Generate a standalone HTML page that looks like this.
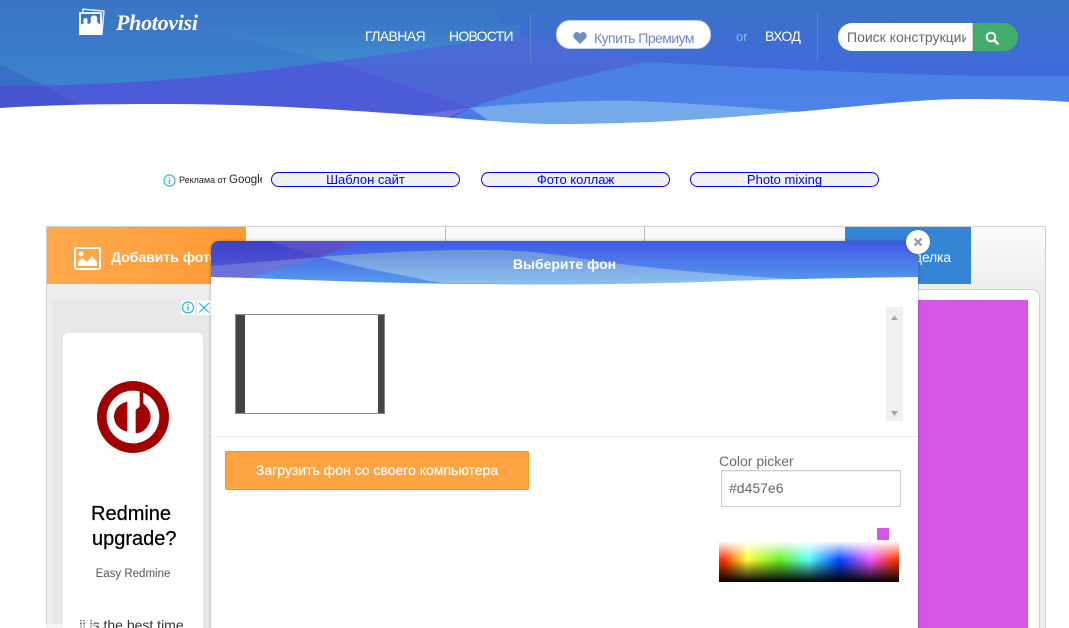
<!DOCTYPE html>
<html lang="ru"><head><meta charset="utf-8"><title>Photovisi</title>
<style>
html,body{margin:0;padding:0;background:#fff;overflow:hidden;width:1069px;height:628px}
#root{width:1069px;height:628px;position:relative;overflow:hidden;font-family:"Liberation Sans",sans-serif}
.a{position:absolute;white-space:nowrap}
.pill{position:absolute;top:172px;height:13px;border:1px solid #00f;border-radius:8px;background:#f0f0f0;color:#00f;font-size:13px;line-height:13px;text-align:center}
</style></head><body><div id="root">

<svg class="a" style="left:0;top:0" width="1069" height="130" viewBox="0 0 1069 130">
<defs>
<linearGradient id="g1" x1="0" y1="0" x2="0" y2="1"><stop offset="0" stop-color="#3a74c4"/><stop offset=".65" stop-color="#3b82ce"/></linearGradient>
<linearGradient id="g3" x1="0" y1="0" x2="0" y2="1"><stop offset="0" stop-color="#3a74c6"/><stop offset="1" stop-color="#4268de"/></linearGradient>
<linearGradient id="g4" x1="0" y1="0" x2="0" y2="1"><stop offset="0" stop-color="#4a7ee4"/><stop offset="1" stop-color="#4d85ea"/></linearGradient>
<linearGradient id="g5" x1="0" y1="0" x2="0" y2="1"><stop offset="0" stop-color="#3a78c8"/><stop offset="1" stop-color="#3f8cce"/></linearGradient>
<linearGradient id="g6" x1="0" y1="0" x2="0" y2="1"><stop offset="0" stop-color="#4a6cd4"/><stop offset="1" stop-color="#5062d8"/></linearGradient>
</defs>
<rect width="1069" height="130" fill="url(#g1)"/>
<path d="M500 0H1069V80H500Z" fill="url(#g3)"/>
<path d="M180 26C240 38 290 50 330 62C400 52 470 44 520 36V25C400 25 290 26 180 26Z" fill="url(#g5)"/>
<path d="M0 65L45 86H0Z" fill="#3a6ec8"/>
<path d="M0 86C100 86 200 80 330 62C400 52 470 42 520 36C570 48 620 58 680 64C800 75 950 80 1069 76V130H0Z" fill="url(#g6)"/>
<path d="M0 86C100 86 200 80 330 62C380 75 430 95 470 108L505 125H0Z" fill="#4c5cd8"/>
<path d="M0 86H45L85 108H0Z" fill="#4655cf"/>
<path d="M470 108C520 90 580 77 646 62C800 70 950 78 1069 76V130H470Z" fill="url(#g4)"/>
<path d="M440 125L470 108L510 126Z" fill="#4a7be4"/>
<path d="M400 118C430 114 450 110 470 108L440 120Z" fill="#6a70d8"/>
<path d="M470 108C530 102 600 100 640 101C700 104 760 108 800 112L640 128H500Z" fill="#74a9ea"/>
<path d="M0 108C60 104 120 104 170 104C270 104 380 112 505 122C550 125 580 124 620 123C690 121 740 116 795 112C860 106 920 99 968 99C1010 99 1040 100 1069 102V130H0Z" fill="#fff"/>
<line x1="530.500" y1="13" x2="530.500" y2="62" stroke="#6f8fd0" stroke-opacity=".6"/>
<line x1="817.500" y1="13" x2="817.500" y2="62" stroke="#6f8fd0" stroke-opacity=".6"/>
<g transform="rotate(5 92 21)"><rect x="82" y="10" width="21" height="23" fill="#3a76c4" stroke="#e8eef8" stroke-width="1.500"/></g>
<rect x="80" y="13" width="21" height="20" fill="#3a76c4" stroke="#fff" stroke-width="1.800"/>
<path d="M79 35V26C81 24 83 24 84 23C83 21 83 18 85.500 18C88 18 88 21 87 23L89 24C91 22.500 91 22 91 21C90 18 91 15.500 94 15.500C97 15.500 98 18 97 21C97 23 100 24 102 26V35Z" fill="#fff"/>
</svg>
<div class="a" style="left:116px;top:8px;font:italic bold 22px/30px 'Liberation Serif',serif;color:#fff;letter-spacing:-.3px">Photovisi</div>

<div class="a" style="left:365px;top:28px;color:#fff;font-size:14px;line-height:16px;letter-spacing:-.6px">ГЛАВНАЯ</div>
<div class="a" style="left:449px;top:28px;color:#fff;font-size:14px;line-height:16px;letter-spacing:-.75px">НОВОСТИ</div>
<div class="a" style="left:556px;top:20px;width:153px;height:27px;background:#fff;border-radius:14px;border:1px solid #c4cfe6"></div>
<svg class="a" style="left:573px;top:32px" width="14" height="12" viewBox="0 0 15 13"><path d="M7.500 13L1 6.500C-1 3 1.500 0 4 0C5.500 0 6.800 .8 7.500 2C8.200 .8 9.500 0 11 0C13.500 0 16 3 14 6.500Z" fill="#6b8fc6"/></svg>
<div class="a" style="left:594px;top:30px;color:#6f87c0;font-size:14px;line-height:16px;letter-spacing:-.55px">Купить Премиум</div>
<div class="a" style="left:736px;top:29px;color:#9db2e0;font-size:13px;line-height:16px">or</div>
<div class="a" style="left:765px;top:28px;color:#fff;font-size:14px;line-height:16px;letter-spacing:-.6px">ВХОД</div>
<div class="a" style="left:838px;top:23px;width:135px;height:28px;background:#fff;border-radius:14px 0 0 14px;border-right:1px solid #ccc;box-sizing:border-box"></div>
<div class="a" style="left:847px;top:23px;width:119px;height:28px;overflow:hidden;color:#666;font-size:14px;line-height:28px">Поиск конструкции</div>
<div class="a" style="left:973px;top:23px;width:45px;height:28px;background:#42ac6a;border-radius:0 14px 14px 0"></div>
<svg class="a" style="left:985px;top:31px" width="14" height="14" viewBox="0 0 14 14"><circle cx="6" cy="6" r="4.300" fill="none" stroke="#fff" stroke-width="2"/><path d="M9.200 9.200L12.600 12.600" stroke="#fff" stroke-width="2.600" stroke-linecap="round"/></svg>

<svg class="a" style="left:163px;top:174px" width="13" height="13" viewBox="0 0 13 13"><circle cx="6.500" cy="6.500" r="5.500" fill="none" stroke="#3fb6d3" stroke-width="1.200"/><rect x="5.800" y="5.500" width="1.400" height="4.500" fill="#3fb6d3"/><rect x="5.800" y="3" width="1.400" height="1.400" fill="#3fb6d3"/></svg>
<div class="a" style="left:179px;top:174px;width:83px;overflow:hidden;font-size:9px;line-height:13px;color:#222">Реклама от <span style="font-size:11.500px">Google</span></div>
<div class="pill" style="left:271px;width:187px">Шаблон сайт</div>
<div class="pill" style="left:481px;width:187px">Фото коллаж</div>
<div class="pill" style="left:690px;width:187px">Photo mixing</div>

<div class="a" style="left:46px;top:226px;width:998px;height:402px;border:1px solid #d0d0d0;border-bottom:0;background:#eee"></div>
<div class="a" style="left:47px;top:227px;width:998px;height:57px;background:linear-gradient(#fbfbfb,#eeeeee)"></div>
<div class="a" style="left:47px;top:227px;width:199px;height:57px;background:linear-gradient(90deg,#ffa94d,#ff9a35)"></div>
<svg class="a" style="left:74px;top:247px" width="27" height="23" viewBox="0 0 27 23"><rect x="1" y="1" width="25" height="21" rx="2" fill="none" stroke="#fff" stroke-width="2"/><circle cx="7" cy="7" r="2.500" fill="#fff"/><path d="M4 19V15L8 11L13 15L18 9L23 15V19Z" fill="#fff"/></svg>
<div class="a" style="left:111px;top:249px;color:#fff;font-size:14px;font-weight:bold;line-height:17px">Добавить фото</div>
<div class="a" style="left:445px;top:227px;width:1px;height:57px;background:#bbb"></div>
<div class="a" style="left:644px;top:227px;width:1px;height:57px;background:#bbb"></div>
<div class="a" style="left:845px;top:227px;width:126px;height:57px;background:#3585d6;color:#fff;font-size:14px;line-height:60px;overflow:hidden"><span class="a" style="left:59px;top:0;letter-spacing:-.2px">Сделка</span></div>

<div class="a" style="left:53px;top:299px;width:158px;height:329px;background:#e8e8e8"></div>
<div class="a" style="left:181px;top:300px;width:14px;height:15px;background:#fff"></div>
<div class="a" style="left:197px;top:300px;width:14px;height:15px;background:#fff"></div>
<svg class="a" style="left:181px;top:300px" width="30" height="15" viewBox="0 0 30 15"><circle cx="7" cy="7.500" r="5.500" fill="none" stroke="#28b6d8" stroke-width="1.200"/><rect x="6.300" y="6.500" width="1.400" height="4" fill="#28b6d8"/><rect x="6.300" y="3.800" width="1.400" height="1.400" fill="#28b6d8"/><path d="M18 3L28 12.500M28 3L18 12.500" stroke="#28b6d8" stroke-width="1.200"/></svg>
<div class="a" style="left:63px;top:333px;width:140px;height:295px;background:#fff;border-radius:5px 5px 0 0"></div>
<svg class="a" style="left:89px;top:375px" width="86" height="86" viewBox="0 0 258 258"><circle cx="132" cy="126" r="108" fill="#a00000"/><circle cx="132" cy="126" r="79" fill="#fff"/><path d="M115 80C90 85 75 105 75 125C75 145 90 165 115 170Z" fill="#a00000"/><path d="M140 175V105L152 95V48H163V85C175 95 185 110 185 125C185 150 165 175 140 175Z" fill="#a00000"/></svg>
<div class="a" style="left:91px;top:502px;color:#000;font-size:20px;line-height:25px;-webkit-text-stroke:.25px #000">Redmine<br><span style="margin-left:1px">upgrade?</span></div>
<div class="a" style="left:63px;top:566px;width:140px;text-align:center;color:#555;font-size:11.500px;line-height:16px">Easy Redmine</div>
<div class="a" style="left:59px;top:617px;width:140px;text-align:center;color:#333;font-size:14px;line-height:17px;padding-left:5px;box-sizing:border-box">ii is the best time</div>
<div class="a" style="left:46px;top:624px;width:50px;height:4px;background:rgba(255,255,255,.55)"></div>

<div class="a" style="left:880px;top:289px;width:160px;height:339px;background:#fff;border:1px solid #d0d0d0;border-bottom:0;border-radius:8px 8px 0 0;box-sizing:border-box"></div>
<div class="a" style="left:918px;top:300px;width:110px;height:328px;background:#d457e6"></div>

<div class="a" style="left:211px;top:241px;width:707px;height:400px;background:#fff;border-radius:8px 0 0 0;box-shadow:0 0 3px rgba(0,0,0,.3);overflow:hidden">
<svg style="position:absolute;left:0;top:0" width="707" height="48" viewBox="0 0 707 48">
<defs>
<linearGradient id="m1" x1="0" y1="0" x2="0" y2="1"><stop offset="0" stop-color="#4258e2"/><stop offset=".85" stop-color="#5598ee"/></linearGradient>
<linearGradient id="m2" x1="0" y1="0" x2="0" y2="1"><stop offset=".1" stop-color="#6e96dc"/><stop offset=".9" stop-color="#8cbcee"/></linearGradient>
<linearGradient id="m3" x1="0" y1="0" x2="0" y2="1"><stop offset="0" stop-color="#3f40c6"/><stop offset="1" stop-color="#4a52d4"/></linearGradient>
</defs>
<rect width="707" height="48" fill="url(#m1)"/>
<path d="M0 0H59L109 16L0 25Z" fill="url(#m3)"/>
<path d="M59 0H150L109 16Z" fill="#5a50c8"/>
<path d="M0 25L109 16L37 37H0Z" fill="#6b72d8"/>
<path d="M109 16C170 11 220 9 272 9C320 9 350 14 385 20C440 27 510 34 579 38C480 44 340 44 231 42C190 34 145 26 109 16Z" fill="url(#m2)"/>
<path d="M0 36C60 37 170 43 272 43C350 44 430 43 489 41C570 38 640 37 707 36V48H0Z" fill="#fff"/>
</svg>
<div style="position:absolute;left:0;width:707px;top:15px;text-align:center;color:#fff;font-size:14px;font-weight:bold;line-height:17px">Выберите фон</div>
<div style="position:absolute;left:24px;top:73px;width:148px;height:98px;border:1px solid #888;background:#fff"><div style="position:absolute;left:0;top:0;width:9px;height:98px;background:#444"></div><div style="position:absolute;right:0;top:0;width:6px;height:98px;background:#444"></div></div>
<div style="position:absolute;left:675px;top:66px;width:17px;height:114px;background:#f0f0f0"></div>
<svg style="position:absolute;left:675px;top:66px" width="17" height="114" viewBox="0 0 17 114"><path d="M5 13L8.500 8.500L12 13Z" fill="#a3a3a3"/><path d="M5 104H12L8.500 109Z" fill="#a3a3a3"/></svg>
<div style="position:absolute;left:0;top:195px;width:707px;height:1px;background:#eceff3"></div>
<div style="position:absolute;left:14px;top:210px;width:304px;height:39px;box-sizing:border-box;background:#ffa443;border:1px solid #f5931f;border-radius:2px;color:#fff;font-size:14px;line-height:37px;text-align:center;-webkit-text-stroke:.15px #fff">Загрузить фон со своего компьютера</div>
<div style="position:absolute;left:508px;top:212px;color:#6a6a6a;font-size:14px;line-height:16px">Color picker</div>
<div style="position:absolute;left:510px;top:229px;width:180px;height:37px;box-sizing:border-box;border:1px solid #ccc;box-shadow:inset 0 1px 1px rgba(0,0,0,.08);color:#666;font-size:14px;line-height:35px;padding-left:7px">#d457e6</div>
<div style="position:absolute;left:666px;top:287px;width:12px;height:12px;background:#d457e6"></div>
<div style="position:absolute;left:508px;top:300px;width:180px;height:41px;background:linear-gradient(#fff 0,rgba(255,255,255,0) 46%,rgba(0,0,0,0) 46%,#000 100%),linear-gradient(90deg,#ff3300 3%,#ffff33 15.500%,#66ee22 34%,#55ffff 50%,#0044ff 67%,#ee55ff 84%,#ff3300 98%)"></div>
</div>

<div class="a" style="left:906px;top:230px;width:24px;height:24px;background:#fff;border-radius:50%;box-shadow:0 0 2px rgba(0,0,0,.2)"></div>
<svg class="a" style="left:906px;top:230px" width="24" height="24" viewBox="0 0 24 24"><path d="M8.500 8.500L15.500 15.500M15.500 8.500L8.500 15.500" stroke="#999" stroke-width="2.200"/></svg>
</div></body></html>
